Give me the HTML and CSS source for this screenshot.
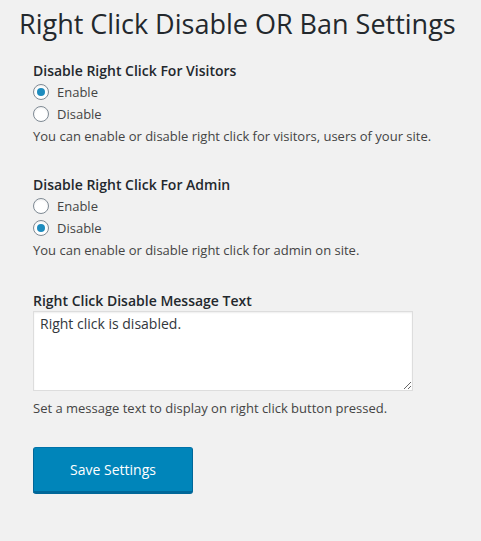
FILE: index.html
```html
<!DOCTYPE html>
<html>
<head>
<meta charset="utf-8">
<link rel="stylesheet" href="styles.css">
</head>
<body>
<div class="wrap">
  <h1 class="title">Right Click Disable OR Ban Settings</h1>
  <form class="settings">
    <div class="field field-visitors">
      <div class="label">Disable Right Click For Visitors</div>
      <label class="radio"><input type="radio" name="visitors" checked><span>Enable</span></label>
      <label class="radio"><input type="radio" name="visitors"><span>Disable</span></label>
      <p class="description">You can enable or disable right click for visitors, users of your site.</p>
    </div>
    <div class="field field-admin">
      <div class="label">Disable Right Click For Admin</div>
      <label class="radio"><input type="radio" name="admin"><span>Enable</span></label>
      <label class="radio"><input type="radio" name="admin" checked><span>Disable</span></label>
      <p class="description">You can enable or disable right click for admin on site.</p>
    </div>
    <div class="field field-message">
      <div class="label">Right Click Disable Message Text</div>
      <textarea class="message">Right click is disabled.</textarea>
      <p class="description">Set a message text to display on right click button pressed.</p>
    </div>
    <button type="button" class="button-primary">Save Settings</button>
  </form>
</div>
</body>
</html>
```

FILE: styles.css
```css
html, body {
  margin: 0;
  padding: 0;
  background: #f1f1f1;
}
body {
  font-family: "Open Sans", "Liberation Sans", sans-serif;
  color: #444;
  font-size: 13px;
}
.wrap {
  padding: 0 0 0 19px;
}
.title {
  margin: 0;
  padding-top: 7px;
  font-size: 27px;
  line-height: 34px;
  font-weight: 400;
  color: #23282d;
}
.settings {
  padding-left: 14px;
  padding-top: 20px;
}
.field-visitors {
  margin-bottom: 28px;
}
.field-admin {
  margin-bottom: 30px;
}
.field-message {
  margin-bottom: 28px;
}
.label {
  font-size: 14px;
  font-weight: 600;
  color: #23282d;
  line-height: 20px;
}
.radio {
  display: flex;
  align-items: center;
  height: 22px;
  font-size: 13px;
  color: #444;
}
.radio input {
  appearance: none;
  -webkit-appearance: none;
  width: 16px;
  height: 16px;
  margin: 0 8px 0 0;
  border: 1px solid #7e8993;
  border-radius: 50%;
  background: #fff;
  box-shadow: inset 0 1px 2px rgba(0,0,0,.07);
  display: flex;
  align-items: center;
  justify-content: center;
  box-sizing: border-box;
}
.radio input:checked::before {
  content: "";
  width: 8px;
  height: 8px;
  border-radius: 50%;
  background: #1e8cbe;
}
.description {
  margin: 0;
  line-height: 22px;
  font-size: 13px;
  color: #444;
}
.message {
  display: block;
  box-sizing: border-box;
  width: 380px;
  height: 80px;
  margin: 0 0 6px 0;
  padding: 2px 6px;
  border: 1px solid #ddd;
  box-shadow: inset 0 1px 2px rgba(0,0,0,.07);
  background: #fff;
  font-family: "Open Sans", "Liberation Sans", sans-serif;
  font-size: 14px;
  line-height: 20px;
  color: #32373c;
  resize: both;
}
.button-primary {
  display: block;
  width: 160px;
  height: 47px;
  margin: 0;
  background: #0085ba;
  border: 1px solid #0073aa;
  border-bottom-width: 3px;
  border-color: #0073aa #006799 #006799;
  border-radius: 3px;
  color: #fff;
  font-family: "Open Sans", "Liberation Sans", sans-serif;
  font-size: 14px;
  cursor: pointer;
}
```
